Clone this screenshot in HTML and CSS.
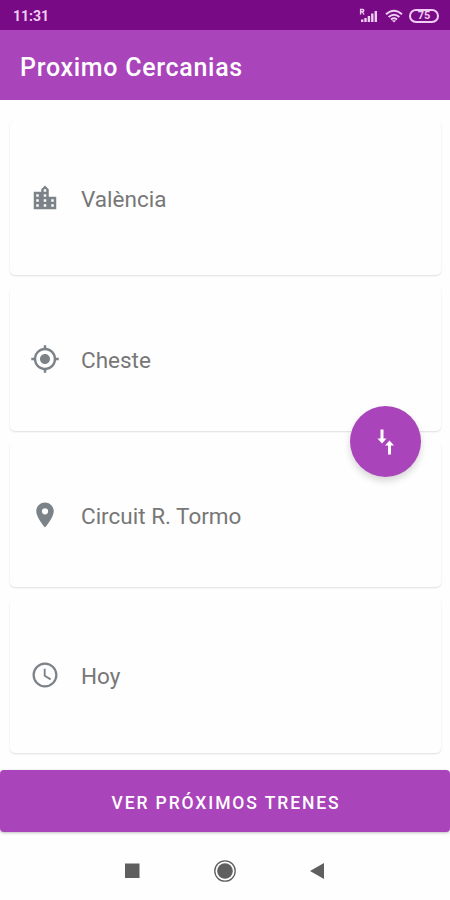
FILE: index.html
```html
<!DOCTYPE html>
<html lang="es">
<head>
    <meta charset="UTF-8">
    <meta name="viewport" content="width=device-width, initial-scale=1.0">
    <title>Proximo Cercanias</title>
    <link rel="stylesheet" href="styles.css">
</head>
<body>
    <div class="status-bar">
        <span class="time">11:31</span>
        <div class="status-icons">
            <svg class="signal" viewBox="0 0 20 16" width="20" height="16">
                <path d="M1.6 6.5V1.5h2.2q1 0 1 1.1t-1 1.1H1.6M3.4 3.7L5 6.5" fill="none" stroke="currentColor" stroke-width="1.4"/>
                <path d="M2 11.5h2.4V14H2zM5.3 10h2.4v4H5.3zM8.7 8h2.4v6H8.7zM12.1 5.5h2.4V14h-2.4zM15.6 3H18v11h-2.4z" fill="currentColor"/>
            </svg>
            <svg class="wifi" viewBox="0 0 18 14" width="18" height="14">
                <path d="M1 5.2q8-7 16 0M3.6 8q5.4-4.6 10.8 0M6 10.5q3-2.4 6 0" fill="none" stroke="currentColor" stroke-width="2"/>
                <path d="M6.8 11.2h4.4L9 13.6z" fill="currentColor"/>
            </svg>
            <div class="battery"><span>75</span></div>
        </div>
    </div>

    <header class="app-bar">
        <h1>Proximo Cercanias</h1>
    </header>

    <main class="cards">
        <div class="card">
            <svg viewBox="0 0 24 24"><path d="M15 11V5l-3-3-3 3v2H3v14h18V11h-6zm-8 8H5v-2h2v2zm0-4H5v-2h2v2zm0-4H5V9h2v2zm6 8h-2v-2h2v2zm0-4h-2v-2h2v2zm0-4h-2V9h2v2zm0-4h-2V5h2v2zm6 12h-2v-2h2v2zm0-4h-2v-2h2v2z"/></svg>
            <span>València</span>
        </div>
        <div class="card card-short">
            <svg viewBox="0 0 24 24"><path d="M12 8c-2.21 0-4 1.79-4 4s1.79 4 4 4 4-1.79 4-4-1.79-4-4-4zm8.94 3A8.994 8.994 0 0 0 13 3.06V1h-2v2.06A8.994 8.994 0 0 0 3.06 11H1v2h2.06A8.994 8.994 0 0 0 11 20.94V23h2v-2.06A8.994 8.994 0 0 0 20.94 13H23v-2h-2.06zM12 19c-3.87 0-7-3.13-7-7s3.13-7 7-7 7 3.13 7 7-3.13 7-7 7z"/></svg>
            <span>Cheste</span>
            <button class="swap-btn" aria-label="Intercambiar">
                <svg viewBox="0 0 24 32" width="24" height="32"><path d="M6.5 3.5h3v9h3L8 17.5l-4.5-5h3zM14 28.5h3v-9h3l-4.5-5-4.5 5h3z"/></svg>
            </button>
        </div>
        <div class="card card-short">
            <svg viewBox="0 0 24 24"><path d="M12 2C8.13 2 5 5.13 5 9c0 5.25 7 13 7 13s7-7.75 7-13c0-3.87-3.13-7-7-7zm0 9.5a2.5 2.5 0 0 1 0-5 2.5 2.5 0 0 1 0 5z"/></svg>
            <span>Circuit R. Tormo</span>
        </div>
        <div class="card card-last">
            <svg viewBox="0 0 24 24"><path d="M11.99 2C6.47 2 2 6.48 2 12s4.47 10 9.99 10C17.52 22 22 17.52 22 12S17.52 2 11.99 2zM12 20.2a8.2 8.2 0 1 1 0-16.4 8.2 8.2 0 0 1 0 16.4zM12.5 7H11v6l5.1 3.1.8-1.3-4.4-2.6z"/></svg>
            <span>Hoy</span>
        </div>
    </main>

    <button class="submit-btn">VER PRÓXIMOS TRENES</button>

    <nav class="nav-bar">
        <svg viewBox="0 0 24 24"><path d="M5 4.5h14.5V19H5z"/></svg>
        <svg viewBox="0 0 24 24"><circle cx="12" cy="12" r="10.2" fill="none" stroke="#5f5f5f" stroke-width="1.3"/><circle cx="12" cy="12" r="7.8"/></svg>
        <svg viewBox="0 0 24 24"><path d="M18 4v16L4 12z"/></svg>
    </nav>
</body>
</html>
```

FILE: styles.css
```css
:root {
    --primary-color: #aa44bb;
    --primary-dark: #780a86;
    --text-color: #777;
    --icon-color: #7b8288;
}

* {
    margin: 0;
    padding: 0;
    box-sizing: border-box;
}

body {
    height: 900px;
    display: flex;
    flex-direction: column;
    font-family: Roboto, sans-serif;
    background: #fefefe;
    overflow: hidden;
}

.status-bar {
    height: 30px;
    padding: 2px 11px 0 13px;
    display: flex;
    align-items: center;
    justify-content: space-between;
    background: var(--primary-dark);
    color: #f0cdf3;
}

.time {
    font-size: 14px;
    font-weight: 700;
}

.status-icons {
    display: flex;
    align-items: center;
    gap: 6px;
}

.battery {
    width: 30px;
    height: 14px;
    border: 2px solid currentColor;
    border-radius: 7px;
    display: flex;
    align-items: center;
    justify-content: center;
    font-size: 11px;
    font-weight: 700;
    line-height: 10px;
}

.app-bar {
    height: 70px;
    padding: 4px 20px 0;
    display: flex;
    align-items: center;
    background: var(--primary-color);
    color: #fff;
}

h1 {
    font-size: 25px;
    font-weight: 500;
    letter-spacing: 0.7px;
}

.cards {
    height: 670px;
    padding: 20px 9px 0 10px;
    display: flex;
    flex-direction: column;
    gap: 12px;
}

.card {
    position: relative;
    height: 155px;
    padding-left: 20px;
    display: flex;
    align-items: center;
    gap: 21px;
    border-radius: 5px;
    background: #fefefe;
    box-shadow: 0 1px 2px rgba(0, 0, 0, 0.13);
    color: var(--text-color);
    font-size: 22.5px;
}

.card-short {
    height: 144px;
}

.card-last {
    height: 154px;
    padding-bottom: 3px;
}

.card > svg {
    width: 30px;
    height: 30px;
    fill: var(--icon-color);
}

.card > span {
    padding-top: 2px;
}

button {
    border: none;
    background: var(--primary-color);
    color: #fff;
    font-family: inherit;
    cursor: pointer;
}

/* floats over the gap between origin and destination */
.swap-btn {
    position: absolute;
    right: 20px;
    bottom: -46px;
    z-index: 1;
    width: 71px;
    height: 71px;
    display: flex;
    align-items: center;
    justify-content: center;
    border-radius: 50%;
    box-shadow: 0 4px 7px rgba(0, 0, 0, 0.16);
}

.swap-btn svg {
    fill: #fff;
}

.submit-btn {
    height: 62px;
    padding: 3px 0 0 2px;
    border-radius: 4px;
    box-shadow: 0 1px 3px rgba(0, 0, 0, 0.25);
    font-size: 17.5px;
    font-weight: 500;
    letter-spacing: 1.9px;
}

.nav-bar {
    flex: 1;
    padding-top: 9px;
    display: flex;
    align-items: center;
    justify-content: center;
    gap: 69px;
}

.nav-bar svg {
    width: 24px;
    height: 24px;
    fill: #5f5f5f;
}
```
